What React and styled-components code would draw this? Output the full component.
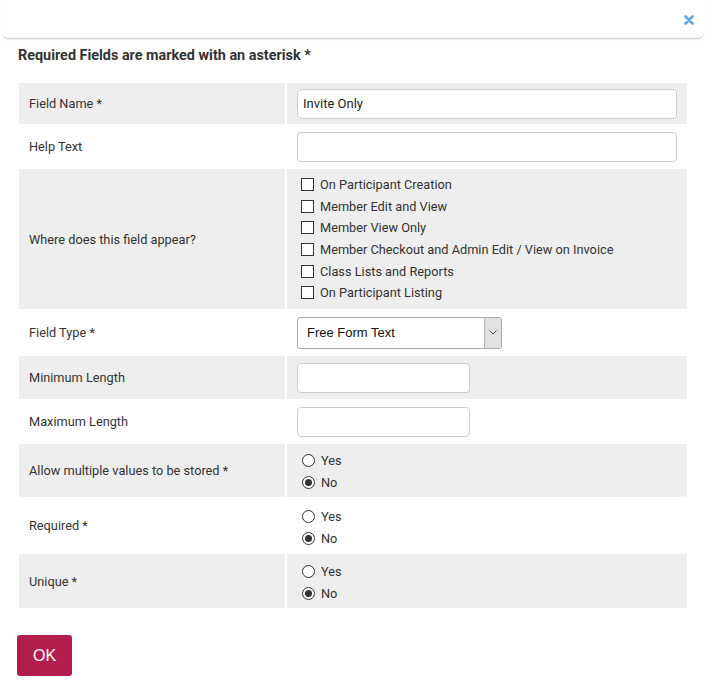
import React from "react";
import styled, { createGlobalStyle } from "styled-components";

const Global = createGlobalStyle`
  html, body { margin: 0; padding: 0; background: #fff; }
  body { font-family: Roboto, "Liberation Sans", Arial, sans-serif; color: #333; }
  * { box-sizing: border-box; }
`;

const Page = styled.div`
  width: 706px;
  height: 696px;
  background: #fff;
  overflow: hidden;
`;

const Header = styled.div`
  margin: 0 2px;
  height: 39px;
  border-bottom: 1px solid #cfcfcf;
  border-radius: 0 0 6px 6px;
  box-shadow: 0 1px 1px rgba(0, 0, 0, 0.06);
  display: flex;
  align-items: center;
  justify-content: flex-end;
  padding-right: 9px;
`;

const CloseButton = styled.button`
  border: 0;
  background: none;
  padding: 0;
  width: 12px;
  height: 12px;
  display: flex;
  align-items: center;
  justify-content: center;
  cursor: pointer;
  margin-top: 1px;
`;

const Body = styled.div`
  padding: 0 17px;
`;

const Title = styled.div`
  font-weight: 700;
  font-size: 14.4px;
  color: #333;
  margin: 8px 0 0 1px;
  height: 36px;
  line-height: 17px;
`;

const Grid = styled.div`
  display: grid;
  grid-template-columns: 266px 400px;
  column-gap: 2px;
  row-gap: 2px;
  padding: 0 2px;
`;

const LabelCell = styled.div`
  background: ${(p) => (p.$alt ? "#eeeeee" : "#fff")};
  font-size: 12.75px;
  color: #333;
  padding-left: 10px;
  display: flex;
  align-items: center;
  min-height: ${(p) => p.$h}px;
`;

const FieldCell = styled.div`
  background: ${(p) => (p.$alt ? "#eeeeee" : "#fff")};
  padding: ${(p) => p.$pad || "5px 10px"};
  min-height: ${(p) => p.$h}px;
  display: flex;
  flex-direction: column;
  justify-content: ${(p) => (p.$top ? "flex-start" : "center")};
`;

const TextInput = styled.input`
  width: ${(p) => p.$w}px;
  height: ${(p) => p.$hh || 30}px;
  border: 1px solid #cccccc;
  border-radius: 4px;
  background: #fff;
  font-family: Roboto, "Liberation Sans", Arial, sans-serif;
  font-size: 13px;
  color: #222;
  padding: 0 5px;
  outline: none;
`;

const SelectBox = styled.div`
  width: 205px;
  height: 32px;
  border: 1px solid #aaaaaa;
  border-radius: 3px;
  background: #fff;
  display: flex;
  overflow: hidden;
`;

const SelectValue = styled.div`
  flex: 1;
  font-family: "Liberation Sans", Arial, sans-serif;
  font-size: 13px;
  color: #111;
  display: flex;
  align-items: center;
  padding-left: 9px;
`;

const SelectArrow = styled.div`
  width: 17px;
  background: #e1e1e1;
  border-left: 1px solid #b5b5b5;
  display: flex;
  align-items: center;
  justify-content: center;
`;

const OptionLine = styled.label`
  display: flex;
  align-items: center;
  height: ${(p) => p.$lh}px;
  font-size: 12.75px;
  color: #333;
  padding-left: ${(p) => p.$indent || 4}px;
  gap: ${(p) => p.$gap || 6}px;
`;

const Check = styled.span`
  width: 13px;
  height: 13px;
  border: 1px solid #333;
  background: #fff;
  display: inline-block;
  flex: none;
`;

const Radio = styled.span`
  width: 13px;
  height: 13px;
  border: 1px solid #333;
  border-radius: 50%;
  background: #fff;
  flex: none;
  display: flex;
  align-items: center;
  justify-content: center;
  &::after {
    content: "";
    width: 7px;
    height: 7px;
    border-radius: 50%;
    background: ${(p) => (p.$on ? "#333" : "transparent")};
  }
`;

const Footer = styled.div`
  padding: 27px 17px 0;
`;

const OkButton = styled.button`
  width: 55px;
  height: 41px;
  border: 0;
  border-radius: 3px;
  background: #b21d4b;
  color: #fff;
  font-family: "Liberation Sans", Arial, sans-serif;
  font-size: 16px;
  cursor: pointer;
`;

const checkOptions = [
  "On Participant Creation",
  "Member Edit and View",
  "Member View Only",
  "Member Checkout and Admin Edit / View on Invoice",
  "Class Lists and Reports",
  "On Participant Listing",
];

function RadioGroup() {
  return (
    <>
      <OptionLine $lh={22} $indent={5} $gap={6}>
        <Radio /> Yes
      </OptionLine>
      <OptionLine $lh={22} $indent={5} $gap={6}>
        <Radio $on /> No
      </OptionLine>
    </>
  );
}

export default function App() {
  return (
    <Page>
      <Global />
      <Header>
        <CloseButton aria-label="close">
          <svg width="10" height="10" viewBox="0 0 10 10">
            <path d="M1.5 1.5 L8.5 8.5 M8.5 1.5 L1.5 8.5" stroke="#62a8de" strokeWidth="2.6" strokeLinecap="round" />
          </svg>
        </CloseButton>
      </Header>
      <Body>
        <Title>Required Fields are marked with an asterisk *</Title>
        <Grid>
          <LabelCell $alt $h={41}>Field Name *</LabelCell>
          <FieldCell $alt $h={41}>
            <TextInput $w={380} defaultValue="Invite Only" />
          </FieldCell>

          <LabelCell $h={41}>Help Text</LabelCell>
          <FieldCell $h={41}>
            <TextInput $w={380} />
          </FieldCell>

          <LabelCell $alt $h={140}>Where does this field appear?</LabelCell>
          <FieldCell $alt $h={140} $pad="5px 10px" $top>
            {checkOptions.map((o) => (
              <OptionLine key={o} $lh={21.6} $indent={4} $gap={6}>
                <Check /> {o}
              </OptionLine>
            ))}
          </FieldCell>

          <LabelCell $h={43}>Field Type *</LabelCell>
          <FieldCell $h={43}>
            <SelectBox>
              <SelectValue>Free Form Text</SelectValue>
              <SelectArrow>
                <svg width="8" height="5" viewBox="0 0 8 5">
                  <path d="M0.5 0.5 L4 4 L7.5 0.5" stroke="#555" strokeWidth="1" fill="none" />
                </svg>
              </SelectArrow>
            </SelectBox>
          </FieldCell>

          <LabelCell $alt $h={43}>Minimum Length</LabelCell>
          <FieldCell $alt $h={43}>
            <TextInput $w={173} />
          </FieldCell>

          <LabelCell $h={41}>Maximum Length</LabelCell>
          <FieldCell $h={41}>
            <TextInput $w={173} />
          </FieldCell>

          <LabelCell $alt $h={53}>Allow multiple values to be stored *</LabelCell>
          <FieldCell $alt $h={53} $pad="5px 10px 4px" $top>
            <RadioGroup />
          </FieldCell>

          <LabelCell $h={53}>Required *</LabelCell>
          <FieldCell $h={53} $pad="6px 10px 3px" $top>
            <RadioGroup />
          </FieldCell>

          <LabelCell $alt $h={54}>Unique *</LabelCell>
          <FieldCell $alt $h={54} $pad="6px 10px 4px" $top>
            <RadioGroup />
          </FieldCell>
        </Grid>
      </Body>
      <Footer>
        <OkButton>OK</OkButton>
      </Footer>
    </Page>
  );
}
